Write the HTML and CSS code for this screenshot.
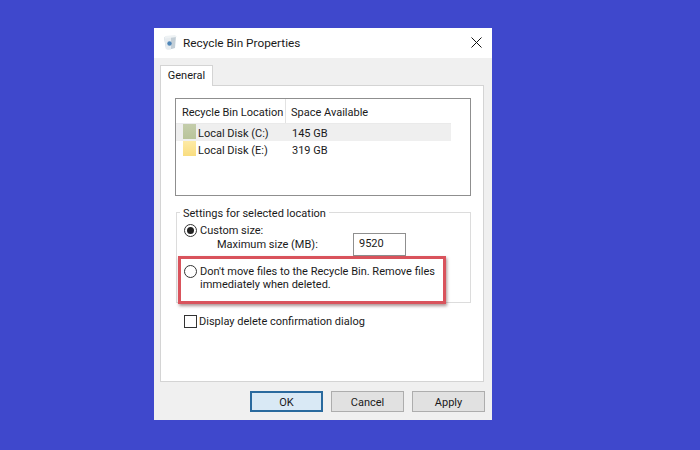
FILE: index.html
```html
<!DOCTYPE html>
<html lang="en">
<head>
    <meta charset="UTF-8">
    <title>Recycle Bin Properties</title>
    <link rel="stylesheet" href="styles.css">
</head>
<body>
    <div class="dialog">
        <!-- title bar -->
        <div class="titlebar">
            <svg class="bin-icon" width="13" height="15" viewBox="0 0 13 15">
                <path d="M0 2 L12 1 L11 13 Q6 15 2 14 Z" fill="#c3ced6"/>
                <path d="M0 2 L7 1.500 L7 14.500 Q4 14.500 2 14 Z" fill="#e6ebef"/>
                <path d="M1 1 L11 0 L13 2 L1 3.500 Z" fill="#eef2f4"/>
                <circle cx="5.500" cy="8.500" r="2.200" fill="#4f86b8"/>
            </svg>
            <span class="title">Recycle Bin Properties</span>
            <svg class="close-icon" width="11" height="11" viewBox="0 0 11 11">
                <path d="M.5 .5 L10.500 10.500 M10.500 .5 L.5 10.500" stroke="#111" stroke-width="1" fill="none"/>
            </svg>
        </div>

        <div class="body">
            <div class="tabs">
                <div class="tab">General</div>
            </div>

            <div class="panel">
                <!-- location list -->
                <div class="list">
                    <div class="list-head">
                        <div class="col-name">Recycle Bin Location</div>
                        <div class="col-space">Space Available</div>
                    </div>
                    <div class="row selected">
                        <span class="disk disk-c"></span>
                        <div class="row-name">Local Disk (C:)</div>
                        <div class="row-space">145 GB</div>
                    </div>
                    <div class="row">
                        <span class="disk disk-e"></span>
                        <div class="row-name">Local Disk (E:)</div>
                        <div class="row-space">319 GB</div>
                    </div>
                </div>

                <!-- settings group -->
                <div class="group">
                    <div class="legend">Settings for selected location</div>
                    <div class="option">
                        <span class="radio checked"></span>
                        <span>Custom size:</span>
                    </div>
                    <div class="size-row">
                        <span>Maximum size (MB):</span>
                        <div class="size-input">9520</div>
                    </div>
                    <div class="option option-off">
                        <span class="radio"></span>
                        <span>Don't move files to the Recycle Bin. Remove files<br>immediately when deleted.</span>
                    </div>
                    <div class="highlight"></div>
                </div>

                <div class="confirm">
                    <span class="checkbox"></span>
                    <span class="confirm-label">Display delete confirmation dialog</span>
                </div>
            </div>

            <div class="buttons">
                <div class="btn btn-default">OK</div>
                <div class="btn">Cancel</div>
                <div class="btn">Apply</div>
            </div>
        </div>
    </div>
</body>
</html>
```

FILE: styles.css
```css
* {
    margin: 0;
    padding: 0;
    box-sizing: border-box;
}

body {
    width: 700px;
    height: 450px;
    overflow: hidden;
    background-color: #3f48cc;
    font-family: Roboto, "Noto Sans", Arial, sans-serif;
    font-size: 11px;
    line-height: 16px;
    color: #1a1a1a;
    padding: 28px 0 0 154px;
}

/* dialog */
.dialog {
    width: 338px;
    height: 392px;
    background: #f0f0f0;
    display: flex;
    flex-direction: column;
}

.titlebar {
    height: 30px;
    background: #fff;
    display: flex;
    align-items: center;
    padding: 0 10px;
}

.bin-icon {
    margin-right: 6px;
    margin-bottom: 1px;
}

.title {
    flex: 1;
    font-size: 11.8px;
}

.close-icon {
    margin-bottom: 2px;
}

.body {
    flex: 1;
    padding: 7px 7px 0 6px;
}

/* tab */
.tabs {
    display: flex;
    height: 20px;
}

.tab {
    width: 53px;
    height: 21px;
    background: #fff;
    border: 1px solid #d4d4d4;
    border-bottom: none;
    text-align: center;
    line-height: 20px;
    position: relative;
    z-index: 1;
}

.panel {
    width: 324px;
    height: 297px;
    background: #fff;
    border: 1px solid #d4d4d4;
    padding: 12px 12px 0 14px;
}

/* list */
.list {
    width: 296px;
    height: 98px;
    border: 1px solid #8f8f8f;
}

.list-head {
    display: flex;
    height: 25px;
    width: 275px;
    border-bottom: 1px solid #eaeaea;
    line-height: 27px;
}

.col-name {
    width: 110px;
    padding-left: 6px;
    border-right: 1px solid #e2e2e2;
    white-space: nowrap;
}

.col-space {
    padding-left: 5px;
    white-space: nowrap;
}

.row {
    display: flex;
    height: 17px;
    width: 275px;
    padding-left: 7px;
    line-height: 19px;
}

.row.selected {
    background: #efefef;
}

.disk {
    width: 13px;
    height: 15px;
    margin-right: 2px;
}

.disk-c {
    background: linear-gradient(#c4cdab, #b9c49a);
}

.disk-e {
    background: linear-gradient(#fdeaa6, #f9dd80);
}

.row-name {
    width: 88px;
}

.row-space {
    padding-left: 6px;
}

/* settings group */
.group {
    position: relative;
    width: 295px;
    height: 91px;
    margin: 16px 0 0 1px;
    padding: 11px 0 0 7px;
    border: 1px solid #dcdcdc;
}

.legend {
    position: absolute;
    top: -7px;
    left: 3px;
    padding: 0 3px;
    background: #fff;
}

.option {
    display: flex;
    align-items: flex-start;
    gap: 3px;
    line-height: 13px;
}

.option-off {
    margin-top: 9px;
}

.radio {
    width: 13px;
    height: 13px;
    border: 1px solid #333;
    border-radius: 50%;
    flex: none;
    position: relative;
}

.radio.checked::after {
    content: "";
    position: absolute;
    left: 2px;
    top: 2px;
    width: 7px;
    height: 7px;
    border-radius: 50%;
    background: #222;
}

.size-row {
    display: flex;
    align-items: center;
    height: 23px;
    padding-left: 33px;
    margin-top: -4px;
}

.size-row span {
    width: 136px;
}

.size-input {
    width: 53px;
    height: 23px;
    border: 1px solid #8f8f8f;
    padding-left: 5px;
    line-height: 20px;
}

/* red box over the second option */
.highlight {
    position: absolute;
    left: 1px;
    top: 43px;
    width: 268px;
    height: 48px;
    border: 3px solid #d9535c;
    box-shadow: 1px 2px 3px rgba(90, 40, 40, 0.5);
}

.confirm {
    display: flex;
    align-items: center;
    gap: 2px;
    margin-top: 9px;
    padding-left: 9px;
}

.confirm-label {
    margin-top: 2px;
}

.checkbox {
    width: 13px;
    height: 13px;
    border: 1px solid #333;
    flex: none;
}

/* buttons */
.buttons {
    display: flex;
    justify-content: flex-end;
    gap: 8px;
    margin-top: 9px;
}

.btn {
    width: 73px;
    height: 21px;
    background: #e1e1e1;
    border: 1px solid #adadad;
    text-align: center;
    line-height: 21px;
}

.btn-default {
    background: #d9e9f5;
    border: 2px solid #2a6a9e;
    line-height: 19px;
}
```
